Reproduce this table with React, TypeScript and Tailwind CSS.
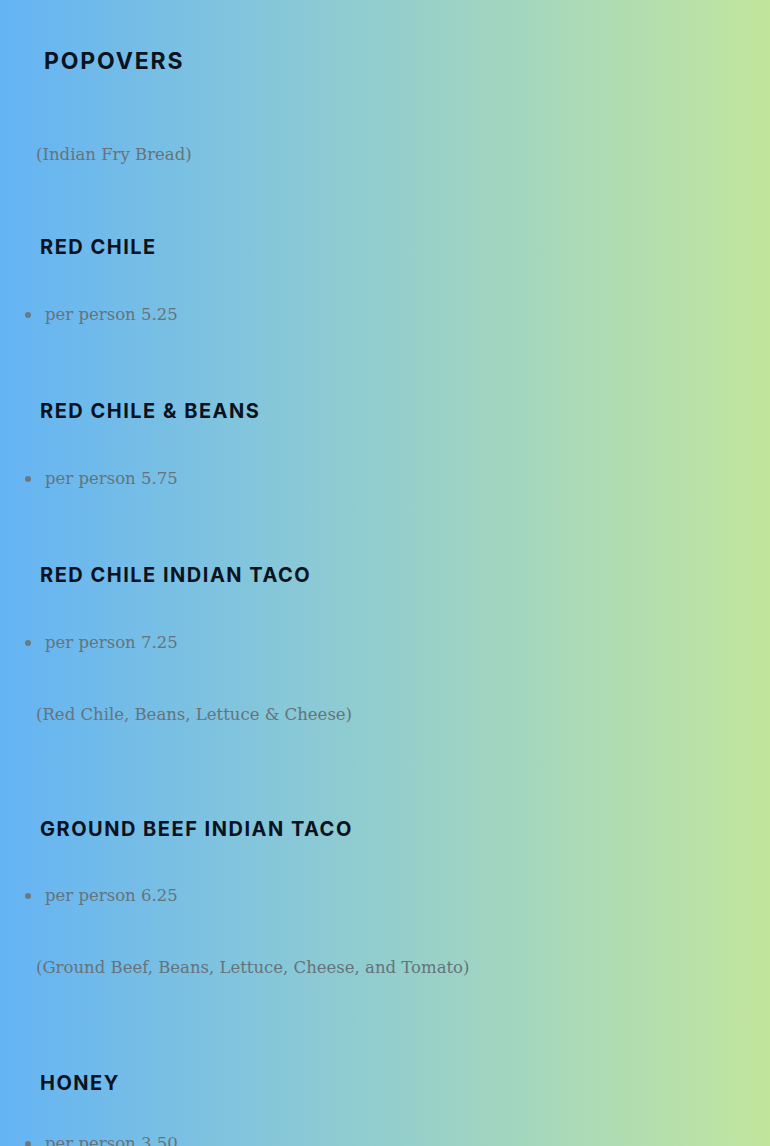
import React from "react";

const H = ({ children, cls = "" }: { children: React.ReactNode; cls?: string }) => (
  <div
    className={`pl-[40px] h-[24px] leading-[24px] text-[20px] font-bold tracking-[0.075em] text-[#0b1220] font-['Inter','Open_Sans',sans-serif] ${cls}`}
  >
    {children}
  </div>
);

const B = ({ children, cls = "" }: { children: React.ReactNode; cls?: string }) => (
  <div className={`flex items-center h-[24px] ${cls}`}>
    <span className="ml-[25px] w-[6px] h-[6px] rounded-full bg-[#6b7a80]" />
    <span className="ml-[14px] text-[16.5px] leading-[24px] text-[#65737a] font-['DejaVu_Serif',serif]">
      {children}
    </span>
  </div>
);

const P = ({ children, cls = "" }: { children: React.ReactNode; cls?: string }) => (
  <div
    className={`pl-[36px] h-[24px] leading-[24px] text-[16.5px] text-[#65737a] font-['DejaVu_Serif',serif] ${cls}`}
  >
    {children}
  </div>
);

export default function App() {
  return (
    <div className="w-[770px] h-[1146px] overflow-hidden bg-gradient-to-r from-[#64b3f4] to-[#c2e59c] flex flex-col pt-[49px]">
      <div className="pl-[44px] h-[24px] leading-[24px] text-[23px] font-bold tracking-[0.08em] text-[#0b1220] font-['Inter','Open_Sans',sans-serif]">
        POPOVERS
      </div>
      <P cls="mt-[70px]">(Indian Fry Bread)</P>
      <H cls="mt-[68px]">RED CHILE</H>
      <B cls="mt-[44px]">per person 5.25</B>
      <H cls="mt-[72px]">RED CHILE &amp; BEANS</H>
      <B cls="mt-[44px]">per person 5.75</B>
      <H cls="mt-[72px]">RED CHILE INDIAN TACO</H>
      <B cls="mt-[44px]">per person 7.25</B>
      <P cls="mt-[48px]">(Red Chile, Beans, Lettuce &amp; Cheese)</P>
      <H cls="mt-[90px]">GROUND BEEF INDIAN TACO</H>
      <B cls="mt-[43px]">per person 6.25</B>
      <P cls="mt-[48px]">(Ground Beef, Beans, Lettuce, Cheese, and Tomato)</P>
      <H cls="mt-[91px]">HONEY</H>
      <B cls="mt-[37px]">per person 3.50</B>
    </div>
  );
}
